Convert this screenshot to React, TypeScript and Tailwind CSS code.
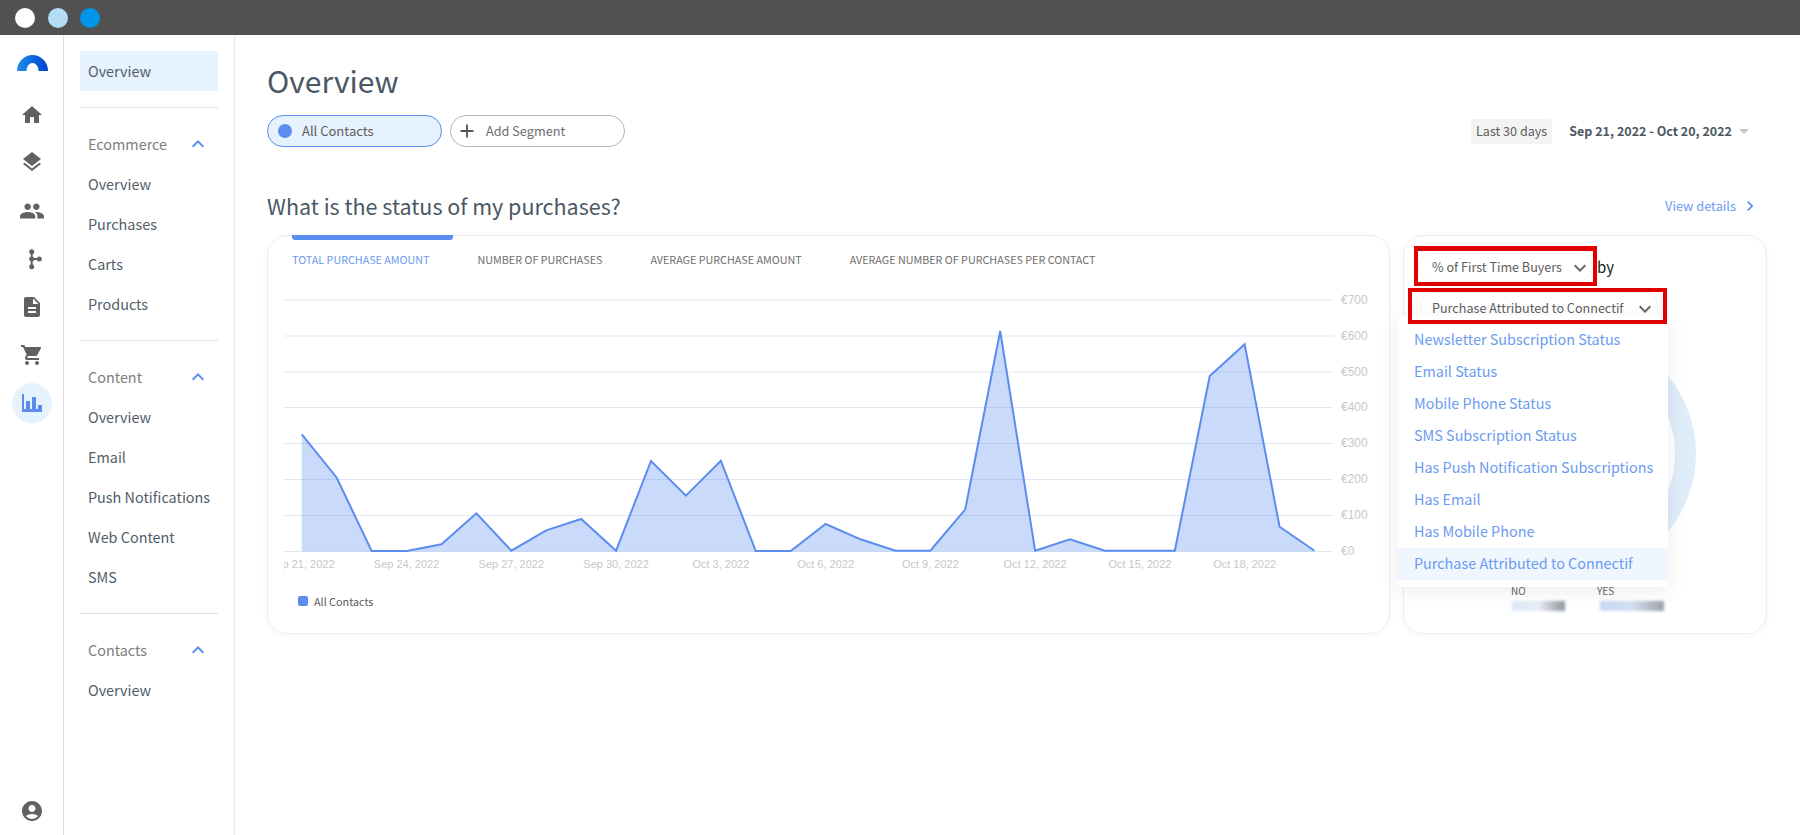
import { MdAccountCircle, MdAdd, MdDescription, MdExpandLess, MdExpandMore, MdHome, MdChevronRight, MdLayers, MdPeople, MdShoppingCart } from "react-icons/md";

const sans = "font-['Noto_Sans_CJK_JP',sans-serif]";

const values = [
  434.3, 477.7, 551, 551, 544.3, 513.3, 550.7, 530.3, 519, 550.7, 461, 495.7, 460.7, 551, 551, 524, 539.3, 550.7, 550.7,
  509.3, 331, 550.7, 539.3, 550.7, 550.7, 550.7, 376, 344.3, 526.7, 550.7,
];
const pointX = (i: number) => 301.8 + 34.92 * i;
const linePoints = values.map((y, i) => `${pointX(i)},${y}`).join(" ");
const gridLines = [300, 336, 372, 407.5, 443.5, 479.5, 515.5, 551.5];
const yLabels = ["€700", "€600", "€500", "€400", "€300", "€200", "€100", "€0"];
const xLabels = [
  "Sep 21, 2022",
  "Sep 24, 2022",
  "Sep 27, 2022",
  "Sep 30, 2022",
  "Oct 3, 2022",
  "Oct 6, 2022",
  "Oct 9, 2022",
  "Oct 12, 2022",
  "Oct 15, 2022",
  "Oct 18, 2022",
];

const dimensions = [
  "Newsletter Subscription Status",
  "Email Status",
  "Mobile Phone Status",
  "SMS Subscription Status",
  "Has Push Notification Subscriptions",
  "Has Email",
  "Has Mobile Phone",
  "Purchase Attributed to Connectif",
];

const tabs = ["NUMBER OF PURCHASES", "AVERAGE PURCHASE AMOUNT", "AVERAGE NUMBER OF PURCHASES PER CONTACT"];

function NavGroup({ title, items }: { title: string; items: string[] }) {
  return (
    <div>
      <div className="flex h-10 items-center justify-between pl-2 pr-2 text-[#7d7d7d]">
        <span>{title}</span>
        <MdExpandLess className="text-[24px] text-[#5b8def]" />
      </div>
      {items.map((item) => (
        <div key={item} className="flex h-10 items-center whitespace-nowrap pl-2 text-[#525d69]">
          {item}
        </div>
      ))}
    </div>
  );
}

function BranchIcon() {
  return (
    <svg width="24" height="24" viewBox="0 0 24 24" fill="#616161">
      <circle cx="11.700" cy="4.700" r="2.500" />
      <circle cx="11.700" cy="12" r="2.500" />
      <circle cx="11.700" cy="19.700" r="2.500" />
      <circle cx="19.300" cy="12" r="2.500" />
      <rect x="10.700" y="5" width="2" height="14" />
      <rect x="12" y="11" width="6" height="2" />
    </svg>
  );
}

function Chart() {
  return (
    <svg width="1121" height="300" viewBox="268 290 1121 300" className="block">
      <defs>
        <clipPath id="plot">
          <rect x="284" y="290" width="1105" height="300" />
        </clipPath>
      </defs>
      {gridLines.map((y, i) => (
        <g key={y}>
          <line x1="284" x2="1333" y1={y} y2={y} stroke="#e1e7f3" strokeWidth="1" />
          <text x="1341" y={y + 3.5} fontSize="12" fill="#c8c8c8" fontFamily="Liberation Sans, sans-serif">
            {yLabels[i]}
          </text>
        </g>
      ))}
      <polygon points={`301.8,551.5 ${linePoints} 1314.5,551.5`} fill="#5b8def" fillOpacity="0.32" />
      <polyline points={linePoints} fill="none" stroke="#5b8def" strokeWidth="2" />
      <g clipPath="url(#plot)">
        {xLabels.map((label, i) => (
          <text
            key={label}
            x={pointX(i * 3)}
            y="568"
            textAnchor="middle"
            fontSize="11"
            fill="#c8c8c8"
            fontFamily="Liberation Sans, sans-serif"
          >
            {label}
          </text>
        ))}
      </g>
    </svg>
  );
}

export default function App() {
  return (
    <div className={`flex h-[835px] w-[1800px] flex-col overflow-hidden bg-white ${sans}`}>
      <div className="flex h-[35px] items-center gap-[12.5px] bg-[#515151] pl-[15px]">
        <span className="h-5 w-5 rounded-full bg-white" />
        <span className="h-5 w-5 rounded-full bg-[#b3dcf6]" />
        <span className="h-5 w-5 rounded-full bg-[#0095e8]" />
      </div>

      <div className="flex min-h-0 flex-1">
        {/* icon rail */}
        <div className="flex w-[64px] flex-col items-center border-r border-[#dddddd] pt-5 text-[#616161]">
          <svg width="31" height="16" viewBox="0 0 31 16" className="ml-[2px]">
            <defs>
              <linearGradient id="logo" x1="0" x2="1" y1="0" y2="0">
                <stop offset="0" stopColor="#1e8fe8" />
                <stop offset="1" stopColor="#0040d0" />
              </linearGradient>
            </defs>
            <path d="M0 16A15.500 16 0 0 1 31 16H21.500A6 8 0 0 0 9.500 16Z" fill="url(#logo)" />
          </svg>
          <MdHome className="mt-[32px] text-[24px]" />
          <MdLayers className="mt-[23px] text-[24px]" />
          <MdPeople className="mt-[24px] text-[26px]" />
          <div className="mt-[23px]">
            <BranchIcon />
          </div>
          <MdDescription className="mt-[24px] text-[24px]" />
          <MdShoppingCart className="mt-[24px] text-[24px]" />
          <div className="mt-[16px] flex h-10 w-10 items-center justify-center rounded-full bg-[#e6f2fe]">
            <svg width="20" height="18" viewBox="0 0 20 18" fill="#5b8def">
              <rect x="0" y="0" width="2" height="18" />
              <rect x="4" y="7" width="4" height="11" />
              <rect x="10" y="3" width="4" height="15" />
              <rect x="16" y="11" width="4" height="7" />
              <rect x="0" y="15" width="20" height="3" />
            </svg>
          </div>
          <MdAccountCircle className="mb-3 mt-auto text-[24px]" />
        </div>

        {/* section nav */}
        <div className="w-[171px] border-r border-[#e8e8e8] px-4 pt-4 text-[14.4px]">
          <div className="flex h-10 items-center bg-[#e6f2fe] pl-2 text-[#525d69]">Overview</div>
          <div className="my-4 border-t border-[#e0e0e0]" />
          <NavGroup title="Ecommerce" items={["Overview", "Purchases", "Carts", "Products"]} />
          <div className="my-4 border-t border-[#e0e0e0]" />
          <NavGroup title="Content" items={["Overview", "Email", "Push Notifications", "Web Content", "SMS"]} />
          <div className="my-4 border-t border-[#e0e0e0]" />
          <NavGroup title="Contacts" items={["Overview"]} />
        </div>

        {/* main */}
        <div className="min-w-0 flex-1 pl-8 pr-[33px] pt-[21px]">
          <h1 className="text-[30px] leading-[48px] text-[#4a5764]">Overview</h1>

          <div className="mt-[11px] flex items-center">
            <div className="flex h-8 w-[175px] items-center rounded-full border border-[#5b8def] bg-[#e6f2fe] pl-[10px] text-[13px] text-[#5c5c5c]">
              <span className="mr-[10px] h-[14px] w-[14px] rounded-full bg-[#5b8def]" />
              All Contacts
            </div>
            <div className="ml-2 flex h-8 w-[175px] items-center rounded-full border border-[#b5b5b5] pl-[5px] text-[12.700px] text-[#6e6e6e]">
              <MdAdd className="mr-2 text-[22px] text-[#555555]" />
              Add Segment
            </div>
            <div className="ml-auto flex items-center pr-[18px]">
              <span className="flex h-[25px] items-center rounded-[2px] bg-[#f3f3f3] px-[5px] text-[12.600px] text-[#5c5c5c]">Last 30 days</span>
              <span className="ml-[17px] text-[12.500px] font-bold text-[#4a5764]">Sep 21, 2022 - Oct 20, 2022</span>
              <span className="ml-[7px] h-0 w-0 border-x-[5px] border-t-[5px] border-x-transparent border-t-[#c5c5c5]" />
            </div>
          </div>

          <div className="mt-[41px] flex items-center justify-between">
            <h2 className="text-[21.500px] leading-9 text-[#4a5764]">What is the status of my purchases?</h2>
            <div className="flex items-center pr-[7px] text-[12.800px] text-[#6b9bf0]">
              View details
              <MdChevronRight className="ml-1 text-[20px] text-[#5b8def]" />
            </div>
          </div>

          <div className="mt-[11px] flex gap-[13px]">
            {/* chart card */}
            <div className="relative h-[399px] w-[1123px] rounded-[20px] border border-[#ececec] shadow-[0_2px_8px_rgba(0,0,0,0.03)]">
              <div className="absolute left-[24px] top-[-1px] h-[5px] w-[161px] rounded-b-[3px] bg-[#5b8def]" />
              <div className="flex gap-12 pl-6 pt-[14px] text-[10.750px] leading-[20px] text-[#6e6e6e]">
                <span className="text-[#6b9bf0]">TOTAL PURCHASE AMOUNT</span>
                {tabs.map((tab) => (
                  <span key={tab}>{tab}</span>
                ))}
              </div>
              <div className="mt-[20px]">
                <Chart />
              </div>
              <div className="flex items-center pl-[30px] pt-[3px] text-[10.800px] text-[#5c5c5c]">
                <span className="mr-[6px] h-[10px] w-[10px] rounded-[2px] bg-[#5b8def]" />
                All Contacts
              </div>
            </div>

            {/* breakdown card */}
            <div className="relative h-[399px] w-[364px] rounded-[20px] border border-[#ececec] shadow-[0_2px_8px_rgba(0,0,0,0.03)]">
              {/* donut sits behind the open menu */}
              <div className="absolute left-[47px] top-[95px] h-[245px] w-[245px] rounded-full border-[21px] border-[#dfecfa]" />

              {/* legend under the menu, values are blurred in the picture */}
              <div className="absolute left-[107px] top-[348px] text-[10px] leading-[13px] text-[#666666]">NO</div>
              <div className="absolute left-[193px] top-[348px] text-[10px] leading-[13px] text-[#666666]">YES</div>
              <div className="absolute left-[108px] top-[365px] h-[10px] w-[53px] bg-gradient-to-r from-[#dbe8fa] via-[#e8edf4] to-[#8f979e] blur-[1.5px]" />
              <div className="absolute left-[196px] top-[365px] h-[10px] w-[64px] bg-gradient-to-r from-[#c5d9f7] via-[#d5dfee] to-[#9aa1a6] blur-[1.5px]" />

              <div className="absolute left-[-6px] top-[79px] z-10 h-[272px] w-[270px] rounded-[4px] bg-white pt-[9px] shadow-[0_4px_20px_rgba(0,0,0,0.08)]">
                {dimensions.map((item, i) => (
                  <div
                    key={item}
                    className={`flex h-8 items-center whitespace-nowrap pb-[2px] pl-4 text-[14.400px] text-[#6b9bf0] ${i === dimensions.length - 1 ? "bg-[#f0f6fe]" : ""}`}
                  >
                    {item}
                  </div>
                ))}
              </div>

              <div className="relative z-20 flex items-start pl-[10px] pt-[10px]">
                <div className="h-10 w-[183px] border-x-[4px] border-b-[4px] border-t-[5px] border-[#e00000]">
                  <div className="mt-[2px] flex h-[29px] items-center whitespace-nowrap rounded-full border border-[#f1f1f1] pl-[13px] text-[12.600px] text-[#5c5c5c]">
                    % of First Time Buyers
                    <MdExpandMore className="ml-auto text-[24px] text-[#666666]" />
                  </div>
                </div>
                <span className="mt-[11px] text-[15px] leading-5 text-[#222222]">by</span>
              </div>
              <div className="relative z-20 ml-[4px] mt-[2px] h-9 w-[259px] border-[4px] border-[#e00000]">
                <div className="ml-2 mr-[5px] flex h-[23px] items-center whitespace-nowrap rounded-t-[14px] border-x border-t border-[#f1f1f1] pl-[11px] pt-[9px] text-[12.600px] text-[#5c5c5c]">
                  Purchase Attributed to Connectif
                  <MdExpandMore className="ml-auto text-[24px] text-[#666666]" />
                </div>
              </div>
            </div>
          </div>
        </div>
      </div>
    </div>
  );
}
